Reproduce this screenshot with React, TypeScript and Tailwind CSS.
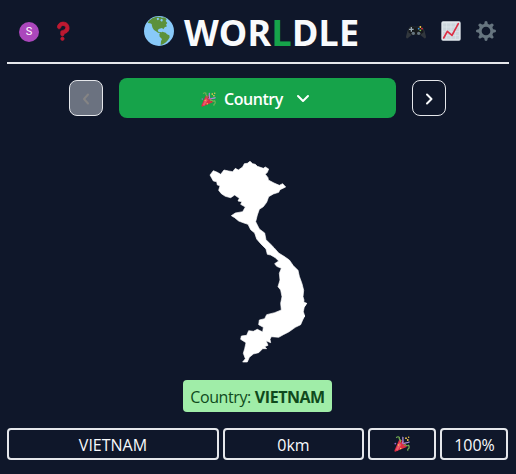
import React from "react";

function Question() {
  return (
    <svg viewBox="0 0 36 36" className="size-5" fill="#be1931" stroke="#be1931" strokeWidth="1.4">
      <path d="M17 27c-1.657 0-3-1.343-3-3v-4c0-1.657 1.343-3 3-3 .603-.006 6-1 6-5 0-2-2-4-5-4-2.441 0-4 2-4 3 0 1.657-1.343 3-3 3s-3-1.343-3-3c0-4.878 4.58-9 10-9 8 0 11 5.982 11 11 0 4.145-2.277 7.313-6.413 8.92-.9.351-1.79.587-2.587.747V24c0 1.657-1.343 3-3 3z" />
      <circle cx="17" cy="32" r="3" />
    </svg>
  );
}

function Globe() {
  return (
    <svg viewBox="0 0 90 90" className="size-[30px]">
      <circle cx="45" cy="45" r="45" fill="#88c9f9" />
      <path
        fill="#5c913b"
        d="M15 14 26 6 38 2 50 3 54 5 61 4 68 9 65 15 70 21 66 26 69 31 62 34 58 40 54 36 46 38 41 42 44 49 51 48 50 51 43 51 36 46 30 42 26 36 24 30 23 24 18 22 11 21ZM48 51 55 47 65 50 69 55 76 58 77 64 72 72 66 79 57 85 50 87 51 76 54 69 47 62 46 55Z"
      />
      <path fill="#88c9f9" d="M38 7 43 5 46 10 40 13ZM51 8 57 11 54 17 49 14Z" />
    </svg>
  );
}

function Gamepad() {
  return (
    <svg viewBox="0 0 60 42" className="mt-px h-[14px] w-5">
      <path
        fill="#31373d"
        d="M10 6 17 2 24 5H36L43 2 50 6 56 19 60 35Q60 41 55 40L43 30H17L5 40Q0 41 0 35L4 19Z"
      />
      <path fill="#16191c" d="M9 8Q17 0 25 7H35Q43 0 51 8L53 22 43 29H17L7 22Z" />
      <path fill="#99aab5" d="M14 6h4v5h5v4h-5v5h-4v-5H9v-4h5Z" />
      <circle cx="22" cy="25" r="5" fill="#66757f" />
      <circle cx="38" cy="25" r="5" fill="#66757f" />
      <circle cx="43" cy="6" r="2.7" fill="#ffcc4d" />
      <circle cx="38" cy="11" r="2.7" fill="#3b94d9" />
      <circle cx="48" cy="11" r="2.7" fill="#dd2e44" />
      <circle cx="43" cy="16" r="2.7" fill="#77b255" />
    </svg>
  );
}

function Chart() {
  return (
    <svg viewBox="0 0 60 60" className="size-5">
      <rect x="1" y="1" width="58" height="58" rx="5" fill="#e1e8ed" />
      <path
        d="M5 6H55V55H5ZM17 6V55M30 6V55M43 6V55M5 18H55M5 31H55M5 43H55"
        fill="#ccd6dd"
        stroke="#e1e8ed"
        strokeWidth="2"
      />
      <path
        d="M8 51 19 31 33 43 52 8"
        fill="none"
        stroke="#dd2e44"
        strokeWidth="5"
        strokeLinecap="round"
        strokeLinejoin="round"
      />
    </svg>
  );
}

function Gear() {
  return (
    <svg viewBox="-30 -30 60 60" className="size-5" fill="#66757f">
      {[0, 45, 90, 135, 180, 225, 270, 315].map((a) => (
        <path key={a} transform={`rotate(${a})`} d="M-6-19-4-28Q-3-30 0-30T4-28L6-19Z" />
      ))}
      <circle r="17.5" fill="none" stroke="#66757f" strokeWidth="9" />
    </svg>
  );
}

function Popper({ className }: { className: string }) {
  return (
    <svg viewBox="0 0 36 36" className={className}>
      <path fill="#dd2e44" d="M11.6 8.2 1 32.5Q.5 36 4 35L28.5 24.5Q29 20 22 13.5T11.6 8.2Z" />
      <path fill="#ea596e" d="M12 14 4 31 8 33 16 20Z" />
      <ellipse cx="20.5" cy="16" rx="1.6" ry="9" transform="rotate(-45 20.5 16)" fill="#a0041e" />
      <path
        d="M18.5 17C23 12 18 6 20.5 2M21 18C25 14 29 17 35 13"
        fill="none"
        stroke="#aa8dd8"
        strokeWidth="3"
      />
      <path
        d="M14 14C18 8 9 8 12 3Q9 0 5 4M22 21C28 17 27 25 33 21Q36 27 31 30V33"
        fill="none"
        stroke="#77b255"
        strokeWidth="2.6"
      />
      <g fill="#ffcc4d">
        <circle cx="27" cy="5" r="2" />
        <circle cx="33" cy="3" r="1.6" />
        <circle cx="31" cy="9" r="2" />
        <circle cx="10" cy="20" r="1.7" />
        <circle cx="15" cy="28" r="1.7" />
      </g>
      <circle cx="3" cy="17" r="2" fill="#9266cc" />
    </svg>
  );
}

function Chevron({ d, className }: { d: string; className: string }) {
  return (
    <svg viewBox="0 0 14 14" className={className} fill="none" stroke="currentColor" strokeWidth="2" strokeLinecap="round" strokeLinejoin="round">
      <path d={d} />
    </svg>
  );
}

function CountryShape() {
  return (
    <svg viewBox="0 0 330 645" className="mr-[7px] h-[215px] w-[110px]" fill="#fff" stroke="#fff" strokeWidth="2">
      <path d="M30 60 40 47 52 52 62 58 72 45 86 48 98 50 106 40 115 45 128 36 133 26 142 25 150 19 158 26 166 28 172 34 190 40 196 36 206 42 202 52 196 58 204 68 205 75 222 84 238 91 248 86 257 96 240 104 236 112 220 117 206 125 200 142 190 155 178 163 172 180 167 200 178 222 194 234 198 254 212 268 222 278 236 294 252 304 268 315 280 332 294 346 298 364 306 386 311 406 309 425 312 435 310 448 320 445 313 455 310 470 314 483 308 495 302 509 286 517 266 531 250 539 236 547 214 545 210 553 212 563 198 557 204 571 194 575 200 581 188 581 176 593 160 597 148 607 142 621 128 621 136 611 130 595 134 581 138 563 122 553 124 543 140 541 146 527 160 529 172 523 188 531 190 517 176 509 178 495 194 491 200 479 224 473 244 465 242 445 246 425 242 405 234 395 240 375 238 355 244 340 230 334 224 326 236 318 226 308 212 300 202 298 198 282 182 266 170 252 164 234 152 224 144 208 132 204 116 198 104 188 94 182 106 174 128 170 136 156 122 148 126 140 114 138 118 130 104 120 92 128 76 124 64 116 56 106 60 92 52 90 50 80 40 78Z" />
      <path d="M309 440 320 445 313 456ZM307 476 315 483 307 491Z" />
    </svg>
  );
}

export default function App() {
  return (
    <div className="h-[474px] w-[516px] overflow-hidden bg-[#0f172a] pl-[7px] pr-[7px] font-['Open_Sans','Noto_Sans',sans-serif] text-base text-slate-50">
      <header className="flex h-16 items-center border-b-2 border-[#e5e7eb]">
        <div className="flex w-[137px] items-center gap-[14px] pl-3">
          <div className="mt-px flex size-5 items-center justify-center rounded-full bg-[#ab47bc] pt-px font-['Roboto',sans-serif] text-[11px] text-white">
            S
          </div>
          <Question />
        </div>
        <Globe />
        <h1 className="ml-[10px] w-[214px] whitespace-nowrap pt-[3px] font-['Noto_Sans',sans-serif] text-4xl font-bold tracking-[0.3px]">
          WOR<span className="text-[#16a34a]">L</span>DLE
        </h1>
        <div className="flex items-center gap-[15px] pl-2">
          <Gamepad />
          <Chart />
          <Gear />
        </div>
      </header>

      <nav className="mt-[14px] flex items-center justify-center gap-4 pr-[1px]">
        <button className="flex h-9 w-[34px] items-center justify-center rounded-lg border border-[#e5e7eb] bg-[#6b7280] text-[#858484]">
          <Chevron d="M9 3.5 5 8l4 4.5" className="size-[14px]" />
        </button>
        <button className="flex h-10 w-[277px] items-center rounded-lg bg-[#16a34a] pl-[82px] font-semibold text-white">
          <Popper className="mt-[2px] size-[15px]" />
          <span className="ml-2 w-[59px] whitespace-nowrap pt-[2px] tracking-[-0.45px]">Country</span>
          <Chevron d="M2 5 7 10l5-5" className="ml-[13px] size-[14px]" />
        </button>
        <button className="flex h-9 w-[34px] items-center justify-center rounded-lg border border-[#e5e7eb]">
          <Chevron d="M5 3.5 9.5 8 5 12.5" className="size-[14px]" />
        </button>
      </nav>

      <main className="mt-[37px] flex flex-col items-center">
        <CountryShape />
        <div className="mr-px mt-[10px] flex h-8 w-[149px] items-center justify-center gap-1 whitespace-nowrap rounded bg-[#a0eda8] pt-[2px] text-[#0f4a1c]">
          <span className="tracking-[-0.4px]">Country:</span>
          <strong className="font-bold tracking-[-0.45px]">VIETNAM</strong>
        </div>
      </main>

      <section className="mt-4 grid h-8 grid-cols-[212px_141px_68px_68px] gap-1">
        <div className="flex items-center justify-center rounded border-2 border-[#e5e7eb] pt-[2px]">VIETNAM</div>
        <div className="flex items-center justify-center rounded border-2 border-[#e5e7eb] pt-[2px]">0km</div>
        <div className="flex items-center justify-center rounded border-2 border-[#e5e7eb]">
          <Popper className="size-4" />
        </div>
        <div className="flex items-center justify-center rounded border-2 border-[#e5e7eb] pt-[2px] pl-px">100%</div>
      </section>
    </div>
  );
}
